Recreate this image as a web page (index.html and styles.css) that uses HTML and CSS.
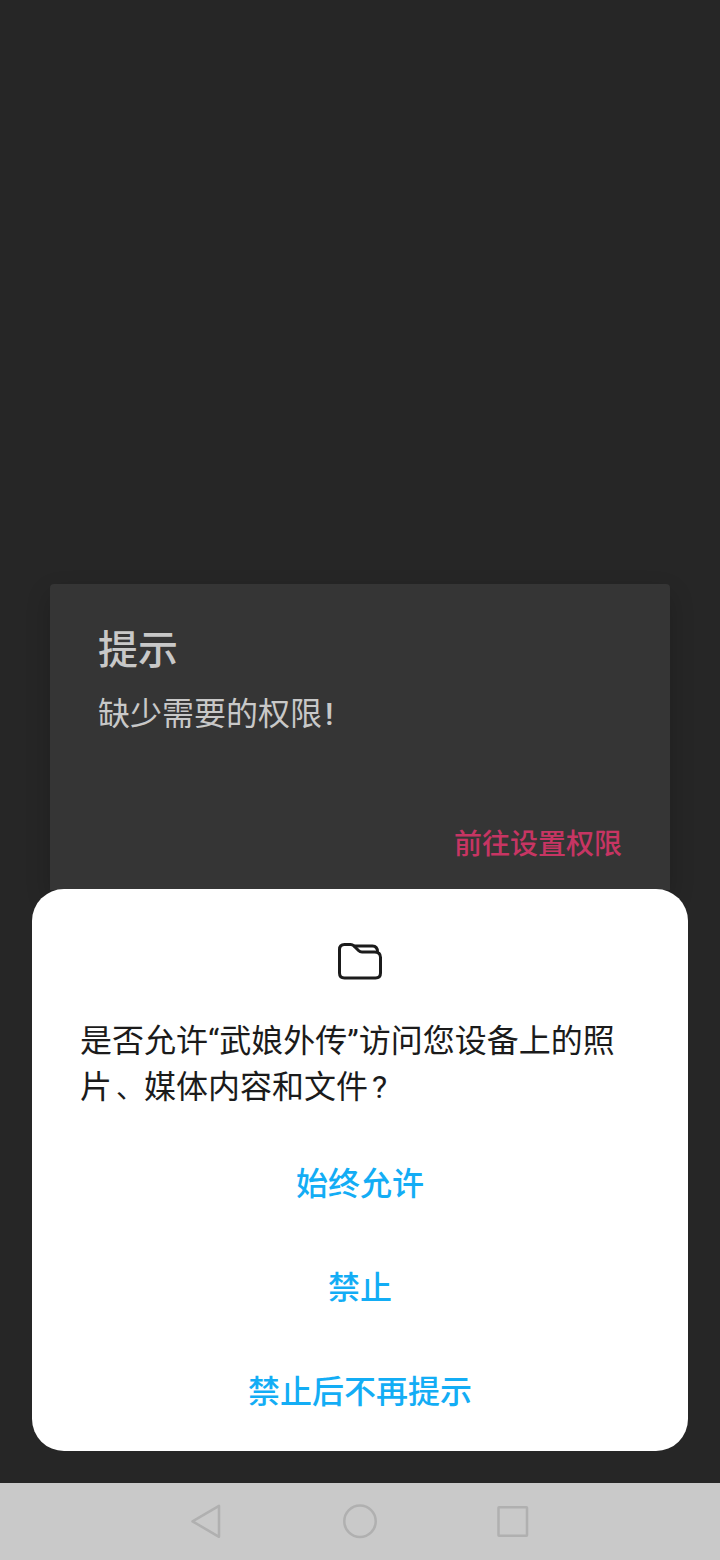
FILE: index.html
```html
<!DOCTYPE html>
<html lang="zh-CN">
<head>
<meta charset="utf-8">
<title>权限</title>
<link rel="stylesheet" href="styles.css">
</head>
<body>
<div class="screen">
  <section class="alert">
    <h1 class="alert-title">提示</h1>
    <p class="alert-text">缺少需要的权限<span class="bang">!</span></p>
    <button class="alert-action">前往设置权限</button>
  </section>
  <main class="sheet">
    <svg class="folder" viewBox="0 0 48 40" fill="none" stroke="#1b1b1b" stroke-width="3" stroke-linejoin="round">
      <path d="M8.500 3.500H14.500Q16.500 3.500 18 5L22.500 9.500Q24 11 26 11H38.500Q44.500 11 44.500 16.500V32Q44.500 37 39.500 37H8.500Q3.500 37 3.500 32V8.500Q3.500 3.500 8.500 3.500Z"/>
      <path d="M17.500 5H36.500Q41.500 5 41.500 11"/>
    </svg>
    <p class="question"><span class="line">是否允许<span class="q">“</span>武娘外传<span class="q">”</span>访问您设备上的照</span><span class="line">片<span class="comma">、</span>媒体内容和文件<span class="ask">?</span></span></p>
    <button class="choice">始终允许</button>
    <button class="choice">禁止</button>
    <button class="choice">禁止后不再提示</button>
  </main>
  <nav class="nav">
    <svg class="nav-icons" viewBox="0 0 720 77" fill="none" stroke="#b0b0b0" stroke-width="2.500" stroke-linejoin="round">
      <path d="M192.500 38.300L219 22.800V53.800Z"/>
      <circle cx="360" cy="38.300" r="15.700"/>
      <rect x="498.500" y="24.300" width="28.500" height="28.500" rx=".5"/>
    </svg>
  </nav>
</div>
</body>
</html>
```
FILE: styles.css
```css
* { box-sizing: border-box; }
body { margin: 0; font-family: "Noto Sans CJK SC", sans-serif; background: #262626; }
button { border: 0; padding: 0; background: none; font-family: inherit; }
.screen { width: 720px; height: 1560px; padding-top: 584px; display: flex; flex-direction: column; overflow: hidden; }
.alert { height: 306px; flex: none; margin: 0 50px; padding: 34px 48px 0; background: #353535; border-radius: 4px 4px 0 0; box-shadow: 0 10px 24px rgba(0,0,0,.2); display: flex; flex-direction: column; color: #c8c8c8; }
.alert-title { margin: 0; font-size: 40px; line-height: 58px; font-weight: 500; }
.alert-text { height: 46px; margin: 12px 0 0; font-size: 32px; line-height: 46px; font-weight: 400; }
.bang { margin-left: 3px; font-family: Roboto, sans-serif; font-weight: 500; line-height: 0; }
.alert-action { align-self: flex-end; margin-top: 88px; font-size: 28px; line-height: 40px; font-weight: 500; color: #c73563; }
.sheet { position: relative; height: 562px; flex: none; margin: -1px 32px 0; padding: 52px 48px 0; background: #fff; border-radius: 32px; display: flex; flex-direction: column; align-items: center; }
.folder { width: 48px; height: 40px; flex: none; }
.question { align-self: stretch; margin: 34px 0 0; font-size: 32px; line-height: 46px; color: #1b1b1b; }
.line { display: block; height: 46px; white-space: nowrap; }
.q { font-family: Roboto, sans-serif; line-height: 0; }
.comma { margin-left: 4px; font-size: 28px; line-height: 0; }
.ask { margin-left: 4px; font-family: Roboto, sans-serif; line-height: 0; }
.choice { height: 104px; flex: none; font-size: 32px; font-weight: 500; color: #13adf5; }
.question + .choice { margin-top: 22px; }
.nav { height: 77px; margin-top: auto; flex: none; background: #c9c9c9; }
.nav-icons { display: block; width: 720px; height: 77px; }
```
